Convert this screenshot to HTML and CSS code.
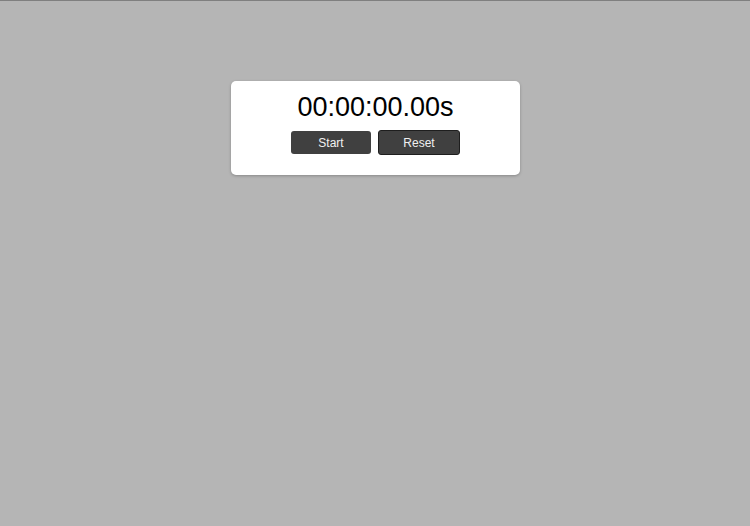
FILE: index.html
```html
<!DOCTYPE html>
<html>
<head>
<meta charset="utf-8">
<link rel="stylesheet" href="styles.css">
</head>
<body>
<div class="card">
  <div class="time">00:00:00.00s</div>
  <div class="buttons">
    <button class="btn start">Start</button>
    <button class="btn reset">Reset</button>
  </div>
</div>
</body>
</html>
```
FILE: styles.css
```css
html, body {
  margin: 0;
  padding: 0;
}
body {
  background: #b5b5b5;
  border-top: 1px solid #7f7f7f;
  height: 525px;
  font-family: "Liberation Sans", Arial, sans-serif;
}
.card {
  width: 289px;
  margin: 80px 0 0 231px;
  background: #ffffff;
  border-radius: 5px;
  box-shadow: 0 1px 3px rgba(0,0,0,0.25);
  padding: 11px 0 20px;
  display: flex;
  flex-direction: column;
  align-items: center;
}
.time {
  font-size: 27px;
  color: #000;
  line-height: 30px;
}
.buttons {
  display: flex;
  align-items: center;
  gap: 7px;
  margin-top: 8px;
}
.btn {
  font-family: "Liberation Sans", Arial, sans-serif;
  font-size: 12px;
  color: #f0f0f0;
  background: #404040;
  border-radius: 3px;
  padding: 0;
  box-sizing: border-box;
}
.start {
  width: 80px;
  height: 23px;
  border: none;
}
.reset {
  width: 82px;
  height: 25px;
  border: 1px solid #1e1e1e;
}
```
